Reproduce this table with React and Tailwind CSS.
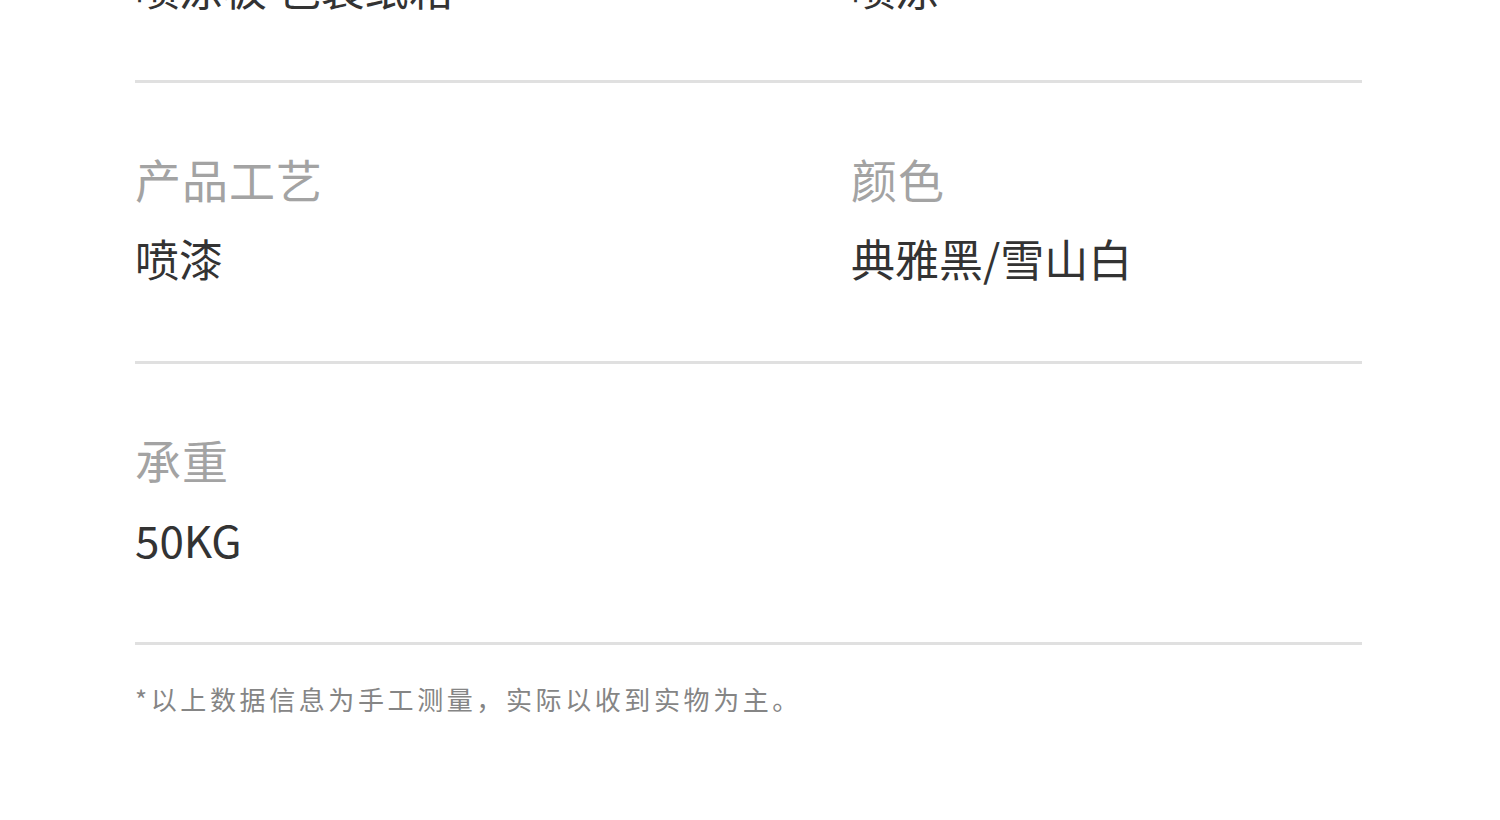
export default function App() {
  const font = { fontFamily: '"Noto Sans CJK SC", "Noto Sans", sans-serif' };
  const Line = () => <div className="h-[3px] w-full bg-[#e0e0e0]" />;
  const Label = ({ children }) => (
    <div className="text-[46px] leading-none text-[#a3a3a3] tracking-[1px]">{children}</div>
  );
  const Value = ({ children }) => (
    <div className="mt-[35px] text-[44px] leading-none text-[#333333]">{children}</div>
  );
  return (
    <div className="h-[820px] w-full overflow-hidden bg-white" style={font}>
      <div className="ml-[135px] w-[1227px]">
        <div className="-mt-[35px] flex">
          <div className="w-[716px] text-[44px] leading-none text-[#333333]">喷涂板 包装纸箱</div>
          <div className="text-[44px] leading-none text-[#333333]">喷涂</div>
        </div>
        <div className="mt-[71px]">
          <Line />
        </div>
        <div className="flex pt-[72px] pb-[81px]">
          <div className="w-[716px]">
            <Label>产品工艺</Label>
            <Value>喷漆</Value>
          </div>
          <div>
            <Label>颜色</Label>
            <Value>典雅黑/雪山白</Value>
          </div>
        </div>
        <Line />
        <div className="flex pt-[72px] pb-[81px]">
          <div className="w-[716px]">
            <Label>承重</Label>
            <Value>50KG</Value>
          </div>
        </div>
        <Line />
        <div className="mt-[41px] text-[26px] leading-none tracking-[3.6px] text-[#858585]">
          *以上数据信息为手工测量，实际以收到实物为主。
        </div>
      </div>
    </div>
  );
}
